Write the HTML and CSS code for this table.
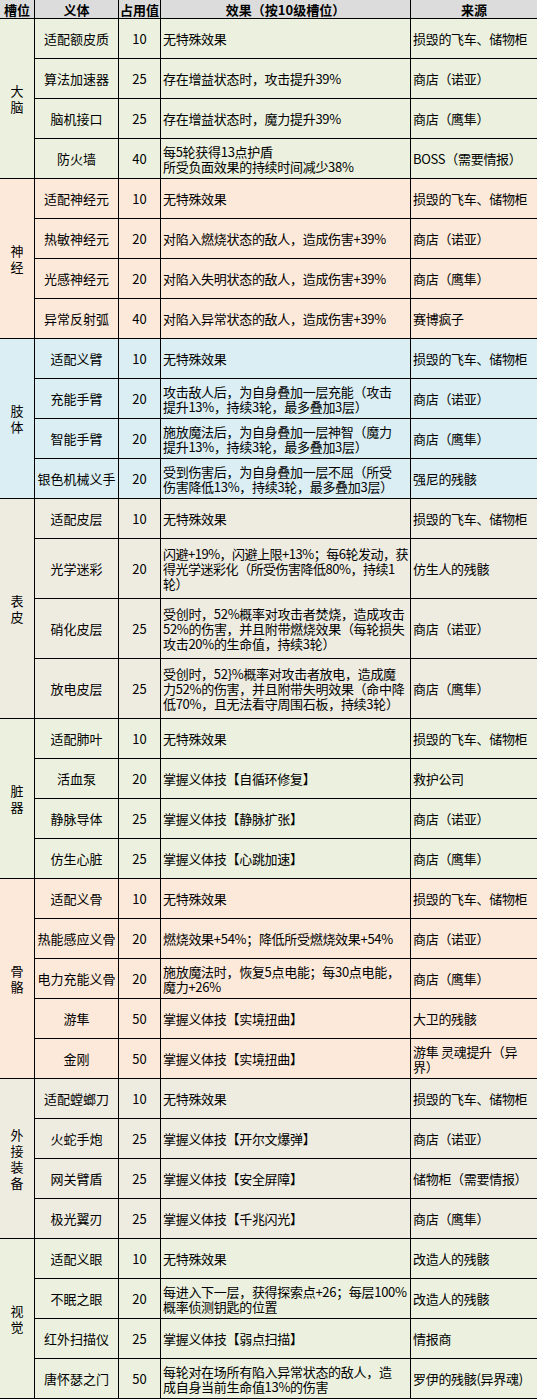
FILE: index.html
```html
<!DOCTYPE html>
<html lang="zh-CN">
<head>
<meta charset="utf-8">
<title>义体一览</title>
<link rel="stylesheet" href="styles.css">
</head>
<body>
<table class="grid">
  <colgroup>
    <col class="c-slot"><col class="c-name"><col class="c-cost"><col class="c-eff"><col class="c-src">
  </colgroup>
  <thead>
    <tr class="head">
      <th>槽位</th><th>义体</th><th>占用值</th><th>效果（按10级槽位）</th><th class="last">来源</th>
    </tr>
  </thead>
  <tbody>
    <tr class="g-green"><td class="slot" rowspan="4"><span>大脑</span></td><td class="name">适配额皮质</td><td class="cost">10</td><td class="eff">无特殊效果</td><td class="src">损毁的飞车、储物柜</td></tr>
    <tr class="g-green"><td class="name">算法加速器</td><td class="cost">25</td><td class="eff">存在增益状态时，攻击提升39%</td><td class="src">商店（诺亚）</td></tr>
    <tr class="g-green"><td class="name">脑机接口</td><td class="cost">25</td><td class="eff">存在增益状态时，魔力提升39%</td><td class="src">商店（鹰隼）</td></tr>
    <tr class="g-green"><td class="name">防火墙</td><td class="cost">40</td><td class="eff">每5轮获得13点护盾<br>所受负面效果的持续时间减少38%</td><td class="src">BOSS（需要情报）</td></tr>

    <tr class="g-peach"><td class="slot" rowspan="4"><span>神经</span></td><td class="name">适配神经元</td><td class="cost">10</td><td class="eff">无特殊效果</td><td class="src">损毁的飞车、储物柜</td></tr>
    <tr class="g-peach"><td class="name">热敏神经元</td><td class="cost">20</td><td class="eff">对陷入燃烧状态的敌人，造成伤害+39%</td><td class="src">商店（诺亚）</td></tr>
    <tr class="g-peach"><td class="name">光感神经元</td><td class="cost">20</td><td class="eff">对陷入失明状态的敌人，造成伤害+39%</td><td class="src">商店（鹰隼）</td></tr>
    <tr class="g-peach"><td class="name">异常反射弧</td><td class="cost">40</td><td class="eff">对陷入异常状态的敌人，造成伤害+39%</td><td class="src">赛博疯子</td></tr>

    <tr class="g-blue"><td class="slot" rowspan="4"><span>肢体</span></td><td class="name">适配义臂</td><td class="cost">10</td><td class="eff">无特殊效果</td><td class="src">损毁的飞车、储物柜</td></tr>
    <tr class="g-blue"><td class="name">充能手臂</td><td class="cost">20</td><td class="eff">攻击敌人后，为自身叠加一层充能（攻击<br>提升13%，持续3轮，最多叠加3层）</td><td class="src">商店（诺亚）</td></tr>
    <tr class="g-blue"><td class="name">智能手臂</td><td class="cost">20</td><td class="eff">施放魔法后，为自身叠加一层神智（魔力<br>提升13%，持续3轮，最多叠加3层）</td><td class="src">商店（鹰隼）</td></tr>
    <tr class="g-blue"><td class="name">银色机械义手</td><td class="cost">20</td><td class="eff">受到伤害后，为自身叠加一层不屈（所受<br>伤害降低13%，持续3轮，最多叠加3层）</td><td class="src">强尼的残骸</td></tr>

    <tr class="g-gray"><td class="slot" rowspan="4"><span>表皮</span></td><td class="name">适配皮层</td><td class="cost">10</td><td class="eff">无特殊效果</td><td class="src">损毁的飞车、储物柜</td></tr>
    <tr class="g-gray tall"><td class="name">光学迷彩</td><td class="cost">20</td><td class="eff tight">闪避+19%，闪避上限+13%；每6轮发动，获<br>得光学迷彩化（所受伤害降低80%，持续1<br>轮）</td><td class="src">仿生人的残骸</td></tr>
    <tr class="g-gray tall"><td class="name">硝化皮层</td><td class="cost">25</td><td class="eff">受创时，52%概率对攻击者焚烧，造成攻击<br>52%的伤害，并且附带燃烧效果（每轮损失<br>攻击20%的生命值，持续3轮）</td><td class="src">商店（诺亚）</td></tr>
    <tr class="g-gray tall"><td class="name">放电皮层</td><td class="cost">25</td><td class="eff">受创时，52}%概率对攻击者放电，造成魔<br>力52%的伤害，并且附带失明效果（命中降<br>低70%，且无法看守周围石板，持续3轮）</td><td class="src">商店（鹰隼）</td></tr>

    <tr class="g-green"><td class="slot" rowspan="4"><span>脏器</span></td><td class="name">适配肺叶</td><td class="cost">10</td><td class="eff">无特殊效果</td><td class="src">损毁的飞车、储物柜</td></tr>
    <tr class="g-green"><td class="name">活血泵</td><td class="cost">20</td><td class="eff">掌握义体技【自循环修复】</td><td class="src">救护公司</td></tr>
    <tr class="g-green"><td class="name">静脉导体</td><td class="cost">25</td><td class="eff">掌握义体技【静脉扩张】</td><td class="src">商店（诺亚）</td></tr>
    <tr class="g-green"><td class="name">仿生心脏</td><td class="cost">25</td><td class="eff">掌握义体技【心跳加速】</td><td class="src">商店（鹰隼）</td></tr>

    <tr class="g-peach"><td class="slot" rowspan="5"><span>骨骼</span></td><td class="name">适配义骨</td><td class="cost">10</td><td class="eff">无特殊效果</td><td class="src">损毁的飞车、储物柜</td></tr>
    <tr class="g-peach"><td class="name">热能感应义骨</td><td class="cost">20</td><td class="eff">燃烧效果+54%；降低所受燃烧效果+54%</td><td class="src">商店（诺亚）</td></tr>
    <tr class="g-peach"><td class="name">电力充能义骨</td><td class="cost">20</td><td class="eff">施放魔法时，恢复5点电能；每30点电能，<br>魔力+26%</td><td class="src">商店（鹰隼）</td></tr>
    <tr class="g-peach"><td class="name">游隼</td><td class="cost">50</td><td class="eff">掌握义体技【实境扭曲】</td><td class="src">大卫的残骸</td></tr>
    <tr class="g-peach"><td class="name">金刚</td><td class="cost">50</td><td class="eff">掌握义体技【实境扭曲】</td><td class="src">游隼 灵魂提升（异<br>界）</td></tr>

    <tr class="g-gray"><td class="slot" rowspan="4"><span>外接装备</span></td><td class="name">适配螳螂刀</td><td class="cost">10</td><td class="eff">无特殊效果</td><td class="src">损毁的飞车、储物柜</td></tr>
    <tr class="g-gray"><td class="name">火蛇手炮</td><td class="cost">25</td><td class="eff">掌握义体技【开尔文爆弹】</td><td class="src">商店（诺亚）</td></tr>
    <tr class="g-gray"><td class="name">网关臂盾</td><td class="cost">25</td><td class="eff">掌握义体技【安全屏障】</td><td class="src">储物柜（需要情报）</td></tr>
    <tr class="g-gray"><td class="name">极光翼刃</td><td class="cost">25</td><td class="eff">掌握义体技【千兆闪光】</td><td class="src">商店（鹰隼）</td></tr>

    <tr class="g-green"><td class="slot" rowspan="4"><span>视觉</span></td><td class="name">适配义眼</td><td class="cost">10</td><td class="eff">无特殊效果</td><td class="src">改造人的残骸</td></tr>
    <tr class="g-green"><td class="name">不眠之眼</td><td class="cost">20</td><td class="eff">每进入下一层，获得探索点+26；每层100%<br>概率侦测钥匙的位置</td><td class="src">改造人的残骸</td></tr>
    <tr class="g-green"><td class="name">红外扫描仪</td><td class="cost">25</td><td class="eff">掌握义体技【弱点扫描】</td><td class="src">情报商</td></tr>
    <tr class="g-green"><td class="name">唐怀瑟之门</td><td class="cost">50</td><td class="eff">每轮对在场所有陷入异常状态的敌人，造<br>成自身当前生命值13%的伤害</td><td class="src">罗伊的残骸(异界魂)</td></tr>
  </tbody>
</table>
</body>
</html>
```

FILE: styles.css
```css
html, body {
  margin: 0;
  padding: 0;
  background: #ffffff;
}

body {
  font-family: "Noto Sans CJK SC", "Noto Sans", sans-serif;
  font-size: 13px;
  color: #000;
}

.grid {
  width: 537px;
  table-layout: fixed;
  border-collapse: separate;
  border-spacing: 0;
}

.c-slot { width: 35px; }
.c-name { width: 84px; }
.c-cost { width: 42px; }
.c-eff { width: 250px; }
.c-src { width: 126px; }

.grid th,
.grid td {
  box-sizing: border-box;
  border-right: 1px solid #000;
  border-bottom: 1px solid #000;
  padding: 0 2px;
  line-height: 15px;
  vertical-align: middle;
  white-space: nowrap;
  overflow: hidden;
}

.grid .src,
.grid .last {
  border-right: none;
}

.head { height: 19px; }
.head th {
  background: #dcdcdc;
  font-weight: bold;
  text-align: center;
  line-height: 17px;
  padding: 0;
}

.grid tbody tr { height: 40px; }
.grid tbody tr.tall { height: 60px; }

.g-green td { background: #ebf1de; }
.g-peach td { background: #fde9d9; }
.g-blue td { background: #daeef3; }
.g-gray td { background: #eeece1; }

.slot {
  text-align: center;
  padding: 0;
}
.slot span {
  display: inline-block;
  width: 13px;
  white-space: normal;
  line-height: 16px;
}

.name,
.cost {
  text-align: center;
}
.grid .name,
.grid .cost {
  padding: 0;
}

.eff,
.src {
  text-align: left;
  letter-spacing: -0.3px;
}

.grid .tight {
  letter-spacing: -0.5px;
}
```
